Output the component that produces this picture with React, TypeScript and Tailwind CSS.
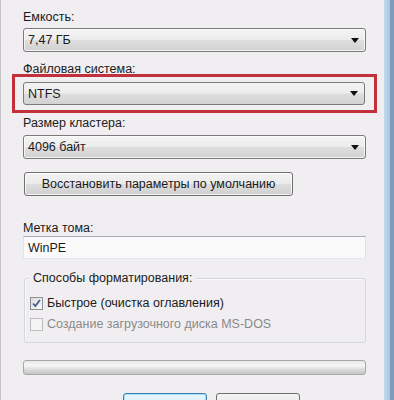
import { useState } from "react";

const combo =
  "h-[24px] flex items-center justify-between pl-[4px] pr-[6px] rounded-[3px] border border-[#7a7a7a] bg-[linear-gradient(to_bottom,#f4f4f4_0%,#ececec_48%,#dedede_52%,#d2d2d2_100%)] shadow-[inset_0_0_0_1px_rgba(255,255,255,0.7)]";

function Arrow() {
  return (
    <svg width="8" height="5" viewBox="0 0 8 5">
      <path d="M0 0h8L4 5z" fill="#111" />
    </svg>
  );
}

function Combo({ value }: { value: string }) {
  return (
    <div className={combo}>
      <span>{value}</span>
      <Arrow />
    </div>
  );
}

function Check({ checked, disabled }: { checked?: boolean; disabled?: boolean }) {
  return (
    <div
      className={
        disabled
          ? "w-[13px] h-[13px] border border-[#bdbdbd] bg-[#f4f4f4] shrink-0"
          : "w-[13px] h-[13px] border border-[#8e8f8f] bg-[linear-gradient(135deg,#dcdcdc,#fbfbfb)] shrink-0 flex items-center justify-center"
      }
    >
      {checked && (
        <svg width="9" height="9" viewBox="0 0 9 9">
          <path d="M1 4.5l2.3 2.6L8 1" stroke="#4a5f97" strokeWidth="1.8" fill="none" />
        </svg>
      )}
    </div>
  );
}

export default function App() {
  const [quick] = useState(true);

  return (
    <div className="w-[394px] h-[400px] overflow-hidden flex bg-[#f0eef0] text-[12.5px] leading-[16px] text-[#1b1b1b] font-['Liberation_Sans',Arial,sans-serif]">
      <div className="w-[2px] bg-[#f0eef0] border-l border-[#c4c4c8]" />
      <div className="flex-1 flex flex-col *:shrink-0 pl-[21px] pr-[18px]">
        <div className="mt-[9px]">Емкость:</div>
        <div className="mt-[3px]">
          <Combo value="7,47 ГБ" />
        </div>

        <div className="mt-[9px]">Файловая система:</div>
        <div className="-mx-[11px] mt-[-3px] border-[3px] border-[#c2303b] pt-[5px] pb-[5px] pl-[8px] pr-[9px]">
          <div className="h-[23px] flex items-center justify-between pl-[4px] pr-[6px] rounded-[3px] border border-[#7a7a7a] bg-[linear-gradient(to_bottom,#f4f4f4_0%,#ececec_48%,#dedede_52%,#d2d2d2_100%)]">
            <span>NTFS</span>
            <Arrow />
          </div>
        </div>

        <div className="mt-[2px]">Размер кластера:</div>
        <div className="mt-[4px]">
          <Combo value="4096 байт" />
        </div>

        <button className="mt-[13px] w-[269px] h-[24px] ml-[1px] rounded-[3px] border border-[#707070] bg-[linear-gradient(to_bottom,#f3f3f3_0%,#ebebeb_48%,#dddddd_52%,#cfcfcf_100%)] shadow-[inset_0_0_0_1px_rgba(255,255,255,0.75)] text-[12.5px] leading-[16px] text-[#1b1b1b]">
          Восстановить параметры по умолчанию
        </button>

        <div className="mt-[24px]">Метка тома:</div>
        <div className="h-[23px] flex items-center pl-[4px] bg-[#fbfafb] border border-t-[#a9abb1] border-x-[#dfe2e8] border-b-[#e4e8ee]">
          WinPE
        </div>

        {/* group box */}
        <div className="relative mt-[19px] ml-[1px] h-[65px] rounded-[3px] border border-[#d3d7dc] shadow-[inset_1px_1px_0_#fafafa] pt-[16px] pl-[5px] pr-[6px]">
          <span className="absolute left-[4px] top-[-9px] px-[4px] bg-[#f0eef0]">Способы форматирования:</span>
          <div className="flex items-center gap-[4px]">
            <Check checked={quick} />
            <span>Быстрое (очистка оглавления)</span>
          </div>
          <div className="mt-[5px] flex items-center gap-[4px] text-[#8a8a8a]">
            <Check disabled />
            <span>Создание загрузочного диска MS-DOS</span>
          </div>
        </div>

        <div className="mt-[17px] h-[15px] rounded-[3px] border border-[#a8a8a8] bg-[linear-gradient(to_bottom,#e8e8e8_0%,#f6f6f6_35%,#d8d8d8_70%,#c4c4c4_100%)]" />

        <div className="mt-[18px] flex gap-[9px] pl-[100px]">
          <div className="w-[84px] h-[23px] shrink-0 rounded-[3px] border border-[#3c7fb1] bg-[linear-gradient(to_bottom,#eaf6fd,#d9f0fc_50%,#bee6fd_52%,#a7d9f5)] shadow-[inset_0_0_0_1px_#a5e0fb]" />
          <div className="w-[84px] h-[23px] shrink-0 rounded-[3px] border border-[#707070] bg-[linear-gradient(to_bottom,#f3f3f3,#ebebeb_48%,#dddddd_52%,#cfcfcf)]" />
        </div>
      </div>
      <div className="w-[6px] bg-[linear-gradient(to_right,#c4d8ec,#a9c6e3)]" />
      <div className="w-[4px] bg-[#7f9cbb]" />
    </div>
  );
}
